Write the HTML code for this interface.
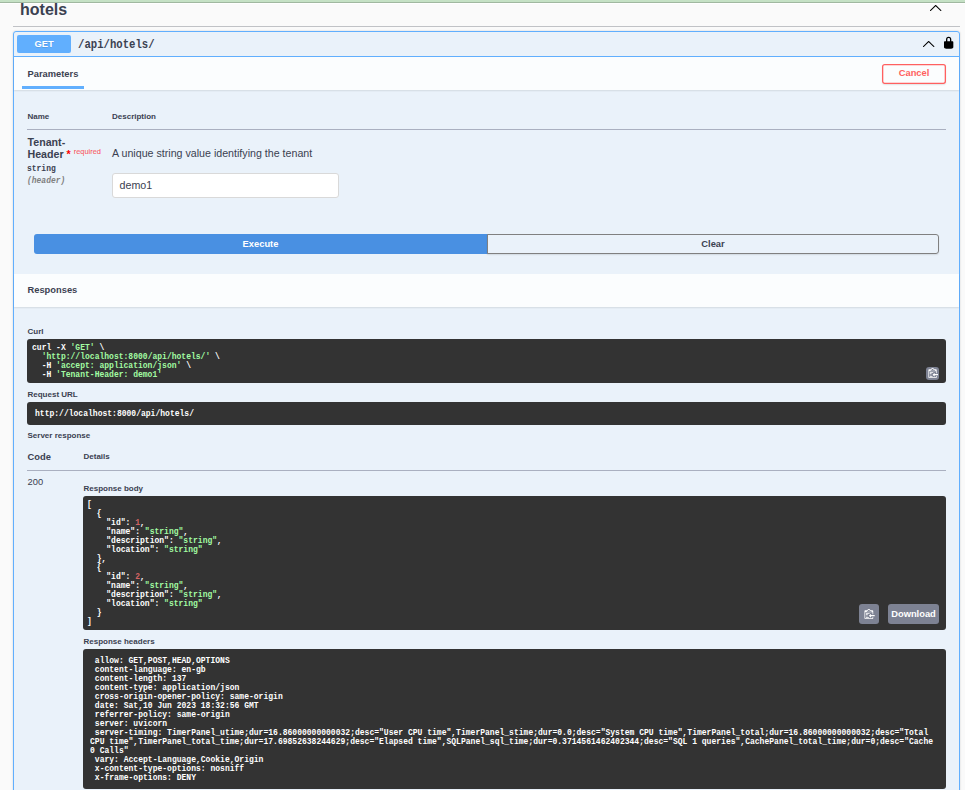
<!DOCTYPE html>
<html>
<head>
<meta charset="utf-8">
<title>Swagger UI</title>
<style>
html,body{margin:0;padding:0;}
body{width:965px;height:790px;overflow:hidden;background:#fafafa;position:relative;font-family:"Liberation Sans",sans-serif;color:#3b4151;}
.abs{position:absolute;}
.t{position:absolute;white-space:nowrap;line-height:1;}
.b{font-weight:bold;}
.mono{font-family:"Liberation Mono",monospace;font-weight:bold;transform-origin:0 0;transform:scaleX(0.81);}
.code{position:absolute;background:#333;border-radius:3px;}
.code pre{position:absolute;margin:0;font-family:"Liberation Mono",monospace;font-weight:bold;font-size:9.85px;line-height:9px;color:#fff;white-space:pre;transform-origin:0 0;transform:scaleX(0.8155);}
.g{color:#a2fca2;}
.r{color:#d36363;}
.lbl{font-size:8px;font-weight:bold;}
.cpy{position:absolute;background:#7d8293;border-radius:3px;}
</style>
</head>
<body>
<!-- top bar -->
<div class="abs" style="left:0;top:0;width:965px;height:2px;background:#c5e1c5;"></div>
<div class="abs" style="left:0;top:2px;width:965px;height:1px;background:#a0b8a0;"></div>
<div class="abs" style="left:0;top:3px;width:965px;height:1px;background:#ffffff;"></div>

<!-- tag header -->
<div class="t b" style="left:20px;top:1px;font-size:16px;line-height:18px;">hotels</div>
<svg class="abs" style="left:929px;top:0.8px;" width="13.33" height="13.33" viewBox="0 0 20 20"><path fill="#000" d="M 17.418 14.908 C 17.69 15.176 18.127 15.176 18.397 14.908 C 18.667 14.64 18.668 14.207 18.397 13.939 L 10.489 6.109 C 10.219 5.841 9.782 5.841 9.51 6.109 L 1.602 13.939 C 1.332 14.207 1.332 14.64 1.602 14.908 C 1.873 15.176 2.311 15.176 2.581 14.908 L 10 7.767 L 17.418 14.908 Z"/></svg>
<div class="abs" style="left:13px;top:26px;width:947px;height:1px;background:rgba(59,65,81,.3);"></div>

<!-- opblock -->
<div class="abs" id="opblock" style="left:13px;top:31px;width:945px;height:780px;border:1px solid #61affe;border-radius:3px;background:rgba(97,175,254,.1);box-shadow:0 0 2px rgba(0,0,0,.19);"></div>

<!-- summary -->
<div class="abs" style="left:17px;top:35px;width:54px;height:18px;background:#61affe;border-radius:2px;"></div>
<div class="t b" style="left:17px;top:39px;width:54px;text-align:center;font-size:9.33px;line-height:11px;color:#fff;text-shadow:0 1px 0 rgba(0,0,0,.1);">GET</div>
<div class="t mono" style="left:78px;top:37.6px;font-size:12.4px;line-height:14px;transform:scaleX(0.858);">/api/hotels/</div>
<svg class="abs" style="left:921.9px;top:36.9px;" width="13.33" height="13.33" viewBox="0 0 20 20"><path fill="#000" d="M 17.418 14.908 C 17.69 15.176 18.127 15.176 18.397 14.908 C 18.667 14.64 18.668 14.207 18.397 13.939 L 10.489 6.109 C 10.219 5.841 9.782 5.841 9.51 6.109 L 1.602 13.939 C 1.332 14.207 1.332 14.64 1.602 14.908 C 1.873 15.176 2.311 15.176 2.581 14.908 L 10 7.767 L 17.418 14.908 Z"/></svg>
<svg class="abs" style="left:942.3px;top:36.1px;" width="13.33" height="13.33" viewBox="0 0 20 20"><path fill="#000" d="M15.8 8H14V5.6C14 2.703 12.665 1 10 1 7.334 1 6 2.703 6 5.6V8H4c-.553 0-1 .646-1 1.199V17c0 .549.428 1.139.951 1.307l1.197.387C5.672 18.861 6.55 19 7.1 19h5.8c.549 0 1.428-.139 1.951-.307l1.196-.387c.524-.167.953-.757.953-1.306V9.199C17 8.646 16.352 8 15.8 8zM12 8H8V5.199C8 3.754 8.797 3 10 3c1.203 0 2 .754 2 2.199V8z"/></svg>
<div class="abs" style="left:14px;top:56px;width:945px;height:1px;background:#61affe;"></div>

<!-- parameters section header -->
<div class="abs" style="left:14px;top:57px;width:945px;height:33px;background:rgba(255,255,255,.8);box-shadow:0 1px 1.5px rgba(0,0,0,.1);"></div>
<div class="t b" style="left:27.5px;top:69px;font-size:9.33px;line-height:11px;">Parameters</div>
<div class="abs" style="left:22px;top:86px;width:62px;height:3px;background:#61affe;"></div>
<div class="abs" style="left:882px;top:64px;width:64px;height:20px;border-radius:3px;box-shadow:0 1px 1.5px rgba(0,0,0,.1);"></div><svg class="abs" style="left:880px;top:62px;" width="68" height="24"><rect x="2.65" y="2.65" width="62.7" height="18.7" rx="2" fill="none" stroke="#ff6060" stroke-width="1.3"/></svg>
<div class="t b" style="left:882px;top:68px;width:64px;text-align:center;font-size:9.33px;line-height:11px;color:#ff6060;">Cancel</div>

<!-- parameters table -->
<div class="t lbl" style="left:27.5px;top:112px;line-height:9px;">Name</div>
<div class="t lbl" style="left:112px;top:112px;line-height:9px;">Description</div>
<div class="abs" style="left:27px;top:129px;width:919px;height:1px;background:#aab0c0;"></div>
<div class="t b" style="left:27.5px;top:136px;font-size:10.67px;line-height:12px;">Tenant-<br>Header<span style="color:red;"> *</span></div>
<div class="t" style="left:73.8px;top:147.8px;font-size:7.4px;line-height:8px;color:rgba(255,0,0,.6);-webkit-text-stroke:0.15px rgba(255,0,40,.6);">required</div>
<div class="t mono" style="left:26.8px;top:162.5px;font-size:9.85px;line-height:11px;">string</div>
<div class="t mono" style="left:26.8px;top:174.5px;font-size:9.85px;line-height:11px;color:gray;font-style:italic;">(header)</div>
<div class="t" style="left:112px;top:146.8px;font-size:10.67px;line-height:12px;">A unique string value identifying the tenant</div>
<div class="abs" style="left:112px;top:173px;width:225px;height:22.5px;border:1px solid #d9d9d9;border-radius:3px;background:#fff;"></div>
<div class="t" style="left:119.6px;top:179px;font-size:10.67px;line-height:12px;color:#3b4151;">demo1</div>

<!-- execute / clear -->
<div class="abs" style="left:34px;top:234px;width:453.5px;height:20px;background:#4990e2;border-radius:3px 0 0 3px;"></div>
<div class="t b" style="left:34px;top:238.5px;width:453px;text-align:center;font-size:9.33px;line-height:11px;color:#fff;">Execute</div>
<div class="abs" style="left:487px;top:234px;width:450px;height:18px;border:1px solid gray;border-radius:0 3px 3px 0;box-shadow:0 1px 1.5px rgba(0,0,0,.1);"></div>
<div class="t b" style="left:487px;top:238.5px;width:452px;text-align:center;font-size:9.33px;line-height:11px;">Clear</div>

<!-- responses header -->
<div class="abs" style="left:14px;top:274px;width:945px;height:33px;background:rgba(255,255,255,.8);box-shadow:0 1px 1.5px rgba(0,0,0,.1);"></div>
<div class="t b" style="left:27.5px;top:285px;font-size:9.33px;line-height:11px;">Responses</div>

<!-- curl -->
<div class="t lbl" style="left:27.5px;top:327px;line-height:9px;">Curl</div>
<div class="code" style="left:27px;top:339px;width:919px;height:44px;">
<pre style="left:4.5px;top:3.8px;">curl -X <span class="g">'GET'</span> \
  <span class="g">'http://localhost:8000/api/hotels/'</span> \
  -H <span class="g">'accept: application/json'</span> \
  -H <span class="g">'Tenant-Header: demo1'</span></pre>
<div class="cpy" style="left:899px;top:28px;width:13px;height:13px;"></div>
<svg class="abs" style="left:899.9px;top:29.2px;" width="11.1" height="10.67" viewBox="0 0 16 16" preserveAspectRatio="none"><path fill="#fff" fill-rule="evenodd" d="M4 12h4v1H4v-1zm5-6H4v1h5V6zm2 3V7l-3 3 3 3v-2h5V9h-5zM6.5 8H4v1h2.5V8zM4 11h2.5v-1H4v1zm9 1h1v2c-.02.28-.11.52-.3.7-.19.18-.42.28-.7.3H3c-.55 0-1-.45-1-1V3c0-.55.45-1 1-1h3c0-1.11.89-2 2-2 1.11 0 2 .89 2 2h3c.55 0 1 .45 1 1v5h-1V5H3v9h10v-2zM4 4h8c0-.55-.45-1-1-1h-1c-.55 0-1-.45-1-1s-.45-1-1-1-1 .45-1 1-.45 1-1 1H6c-.55 0-1 .45-1 1z"/></svg>
</div>

<!-- request url -->
<div class="t lbl" style="left:27.5px;top:390px;line-height:9px;">Request URL</div>
<div class="code" style="left:27px;top:402px;width:919px;height:23px;">
<pre style="left:7.7px;top:6.5px;">http://localhost:8000/api/hotels/</pre>
</div>

<div class="t lbl" style="left:27.5px;top:431px;line-height:9px;">Server response</div>
<div class="t b" style="left:27.5px;top:451.8px;font-size:9.33px;line-height:11px;">Code</div>
<div class="t lbl" style="left:83.5px;top:452px;line-height:9px;">Details</div>
<div class="abs" style="left:27px;top:470px;width:919px;height:1px;background:#aab0c0;"></div>
<div class="t" style="left:27.5px;top:476.8px;font-size:9.33px;line-height:11px;">200</div>
<div class="t lbl" style="left:83.5px;top:484px;line-height:9px;">Response body</div>

<!-- response body -->
<div class="code" style="left:83px;top:496px;width:863px;height:134px;">
<pre style="left:4.3px;top:3.5px;">[
  {
    "id": <span class="r">1</span>,
    "name": <span class="g">"string"</span>,
    "description": <span class="g">"string"</span>,
    "location": <span class="g">"string"</span>
  },
  {
    "id": <span class="r">2</span>,
    "name": <span class="g">"string"</span>,
    "description": <span class="g">"string"</span>,
    "location": <span class="g">"string"</span>
  }
]</pre>
<div class="cpy" style="left:776px;top:108px;width:20px;height:20px;"></div>
<svg class="abs" style="left:779.9px;top:112.7px;" width="11.7" height="10.67" viewBox="0 0 16 16" preserveAspectRatio="none"><path fill="#fff" fill-rule="evenodd" d="M4 12h4v1H4v-1zm5-6H4v1h5V6zm2 3V7l-3 3 3 3v-2h5V9h-5zM6.5 8H4v1h2.5V8zM4 11h2.5v-1H4v1zm9 1h1v2c-.02.28-.11.52-.3.7-.19.18-.42.28-.7.3H3c-.55 0-1-.45-1-1V3c0-.55.45-1 1-1h3c0-1.11.89-2 2-2 1.11 0 2 .89 2 2h3c.55 0 1 .45 1 1v5h-1V5H3v9h10v-2zM4 4h8c0-.55-.45-1-1-1h-1c-.55 0-1-.45-1-1s-.45-1-1-1-1 .45-1 1-.45 1-1 1H6c-.55 0-1 .45-1 1z"/></svg>
<div class="cpy" style="left:805px;top:108px;width:51px;height:20px;"></div>
<div class="t b" style="left:805px;top:112.5px;width:51px;text-align:center;font-size:9.33px;line-height:11px;color:#fff;">Download</div>
</div>

<!-- response headers -->
<div class="t lbl" style="left:83.5px;top:637px;line-height:9px;">Response headers</div>
<div class="code" style="left:83px;top:649px;width:863px;height:139.6px;">
<pre style="left:7.4px;top:6.5px;"> allow: GET,POST,HEAD,OPTIONS 
 content-language: en-gb 
 content-length: 137 
 content-type: application/json 
 cross-origin-opener-policy: same-origin 
 date: Sat,10 Jun 2023 18:32:56 GMT 
 referrer-policy: same-origin 
 server: uvicorn 
 server-timing: TimerPanel_utime;dur=16.86000000000032;desc="User CPU time",TimerPanel_stime;dur=0.0;desc="System CPU time",TimerPanel_total;dur=16.86000000000032;desc="Total
CPU time",TimerPanel_total_time;dur=17.69852638244629;desc="Elapsed time",SQLPanel_sql_time;dur=0.3714561462402344;desc="SQL 1 queries",CachePanel_total_time;dur=0;desc="Cache
0 Calls" 
 vary: Accept-Language,Cookie,Origin 
 x-content-type-options: nosniff 
 x-frame-options: DENY </pre>
</div>
</body>
</html>
